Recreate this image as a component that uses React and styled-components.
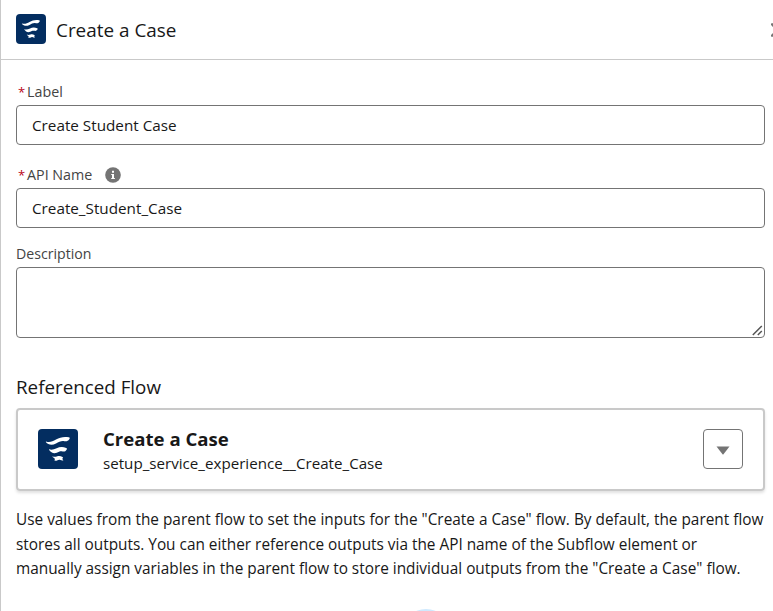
import React from 'react';
import styled, { createGlobalStyle } from 'styled-components';

const GlobalStyle = createGlobalStyle`
  *, *::before, *::after { box-sizing: border-box; }
  body {
    margin: 0;
    overflow: hidden;
    background: #fff;
    color: #181818;
    font-family: 'Open Sans', 'Noto Sans', sans-serif;
  }
`;

const Panel = styled.main`
  display: flex;
  flex-direction: column;
  height: 611px;
  overflow: hidden;
  border-left: 1px solid #c9c9c9;
`;

const Header = styled.header`
  display: flex;
  flex: none;
  align-items: center;
  height: 60px;
  padding: 0 0 1px 15px;
  border-bottom: 1px solid #c9c9c9;
  overflow: hidden;
`;

const Title = styled.h1`
  margin: 1px 0 0 10px;
  flex: 1;
  font-size: 18.9px;
  font-weight: 400;
  line-height: 28px;
`;

const CloseButton = styled.button`
  display: flex;
  flex: none;
  margin-right: -12px;
  padding: 1px 0 0;
  border: 0;
  background: none;
  color: #747474;
`;

const Tile = styled.span`
  display: flex;
  flex: none;
  width: ${(p) => p.$size}px;
  height: ${(p) => p.$size}px;
  border-radius: 4px;
  background: #032d60;
  color: #fff;
`;

const Body = styled.div`
  display: flex;
  flex-direction: column;
  padding: 22px 8px 0 15px;
`;

const Label = styled.label`
  display: flex;
  align-items: center;
  height: 20px;
  margin-bottom: ${(p) => p.$gap}px;
  padding-left: ${(p) => (p.$required ? 2 : 0)}px;
  color: #444;
  font-size: ${(p) => (p.$required ? 14.3 : 14.15)}px;
  line-height: 20px;
`;

const Asterisk = styled.abbr`
  width: 9px;
  color: #ba0517;
  font-size: 13px;
  text-decoration: none;
`;

const InfoIcon = styled.svg`
  margin-left: 12.6px;
`;

const Input = styled.input`
  width: 100%;
  height: 40px;
  margin: 0 0 ${(p) => p.$after}px;
  padding: 0 15px 1px;
  border: 1px solid #747474;
  border-radius: 4px;
  background: #fff;
  color: #181818;
  font: 15.25px 'Open Sans', 'Noto Sans', sans-serif;
  outline: none;
`;

const TextArea = styled.textarea`
  display: block;
  width: 100%;
  height: 71px;
  margin: 0;
  padding: 8px 15px;
  border: 1px solid #747474;
  border-radius: 4px;
  background: #fff;
  font: 15.25px 'Open Sans', 'Noto Sans', sans-serif;
  resize: none;
  outline: none;
`;

const DescriptionBox = styled.div`
  position: relative;
`;

const Grip = styled.svg`
  position: absolute;
  right: 2px;
  bottom: 2px;
`;

const SectionTitle = styled.h2`
  margin: 35px 0 7px;
  font-size: 18.8px;
  font-weight: 400;
  line-height: 28px;
`;

const FlowCard = styled.section`
  display: flex;
  align-items: center;
  height: 83px;
  padding: 0 20px 1px;
  border: 2px solid #c9c9c9;
  border-radius: 4px;
  box-shadow: 0 2px 3px rgba(0, 0, 0, 0.12);
`;

const FlowText = styled.div`
  flex: 1;
  margin-left: 25px;
  padding-top: 4px;
`;

const FlowName = styled.div`
  font-size: 18.6px;
  font-weight: 700;
  line-height: 25px;
`;

const FlowApiName = styled.div`
  font-size: 15.15px;
  line-height: 25px;
`;

const MenuButton = styled.button`
  display: flex;
  align-items: center;
  justify-content: center;
  width: 40px;
  height: 40px;
  padding: 3px 0 0;
  border: 1px solid #747474;
  border-radius: 4px;
  background: #fff;
  color: #747474;
`;

const Help = styled.p`
  margin: 17px 0 0;
  font-size: 15.36px;
  line-height: 24.5px;
  white-space: nowrap;
`;

const Spinner = styled.span`
  flex: none;
  align-self: center;
  width: 48px;
  height: 48px;
  margin: 27.5px 0 0 70px;
  border-radius: 50%;
  background: #cfe9fe;
`;

function SubflowIcon({ size }) {
  return (
    <Tile $size={size}>
      <svg width={size} height={size} viewBox="0 0 40 40" fill="currentColor" aria-hidden="true">
        <path d="M8 12.6C11.5 13.8 14.5 12.7 18 10.6C21.8 8.3 26 7.3 30.8 8.3C32 8.6 32 9.3 31.3 10.2C30 12 28.4 12.7 26.3 12.2C23.2 11.6 21 13 18 14.6C14 16.6 10.2 16 7.8 13Z" />
        <path d="M11.1 20.3C13.7 21.2 16 20.4 18.7 19.2C21.5 17.9 24.8 17.7 28.2 18.9C29.1 19.3 29.1 19.9 28.6 20.7C27.6 22.3 26.3 22.8 24.6 22.4C22.3 21.9 20.8 22.8 18.8 23.7C16 24.9 13 23.9 11 20.8Z" />
        <path d="M14.4 27.3C16.1 28.2 17.6 27.9 19.3 27.2C21.1 26.6 22.9 26.9 24.5 27.9C25.2 28.4 25 28.7 24.6 29.3C24.2 30 24.5 30.7 25.4 31.2C24.5 31.7 23.3 31.3 22.3 30.9C21 30.6 20.1 31 19 31.5C17.9 31.9 16.9 31.8 16.2 31.3C17.2 30.6 17.1 29.8 16 29C15.2 28.5 14.5 28.1 14.4 27.3Z" />
      </svg>
    </Tile>
  );
}

export default function App() {
  return (
    <>
      <GlobalStyle />
      <Panel>
        <Header>
          <SubflowIcon size={30} />
          <Title>Create a Case</Title>
          <CloseButton aria-label="Close">
            <svg width="14" height="14" viewBox="0 0 14 14" fill="none" stroke="currentColor" strokeWidth="2.4" strokeLinecap="round">
              <path d="M1.1 1.3l11.4 11.4M12.5 1.3l-11.4 11.4" />
            </svg>
          </CloseButton>
        </Header>
        <Body>
          <Label htmlFor="label" $required $gap={3}>
            <Asterisk>*</Asterisk>Label
          </Label>
          <Input id="label" defaultValue="Create Student Case" $after={20} />
          <Label htmlFor="api" $required $gap={3}>
            <Asterisk>*</Asterisk>API Name
            <InfoIcon width="16" height="16" viewBox="0 0 16 16">
              <circle cx="8" cy="8" r="7.8" fill="#747474" />
              <path d="M7 3.8h2v2H7zM6.2 7H9v4h.9v1.1H6.2V11H7V8.1h-.8z" fill="#fff" />
            </InfoIcon>
          </Label>
          <Input id="api" defaultValue="Create_Student_Case" $after={16} />
          <Label htmlFor="description" $gap={3}>Description</Label>
          <DescriptionBox>
            <TextArea id="description" />
            <Grip width="11" height="11" viewBox="0 0 11 11" stroke="#555" strokeWidth="1.5" aria-hidden="true">
              <path d="M.8 10L9.8 1M5.8 10L9.8 6" />
            </Grip>
          </DescriptionBox>
          <SectionTitle>Referenced Flow</SectionTitle>
          <FlowCard>
            <SubflowIcon size={40} />
            <FlowText>
              <FlowName>Create a Case</FlowName>
              <FlowApiName>setup_service_experience__Create_Case</FlowApiName>
            </FlowText>
            <MenuButton aria-label="Flow actions">
              <svg width="14" height="9" viewBox="0 0 14 9" fill="currentColor">
                <path d="M.5.5h13L7.5 8.3q-.5.5-1 0z" />
              </svg>
            </MenuButton>
          </FlowCard>
          <Help>
            Use values from the parent flow to set the inputs for the "Create a Case" flow. By default, the parent flow
            <br />
            stores all outputs. You can either reference outputs via the API name of the Subflow element or
            <br />
            manually assign variables in the parent flow to store individual outputs from the "Create a Case" flow.
          </Help>
          <Spinner />
        </Body>
      </Panel>
    </>
  );
}
